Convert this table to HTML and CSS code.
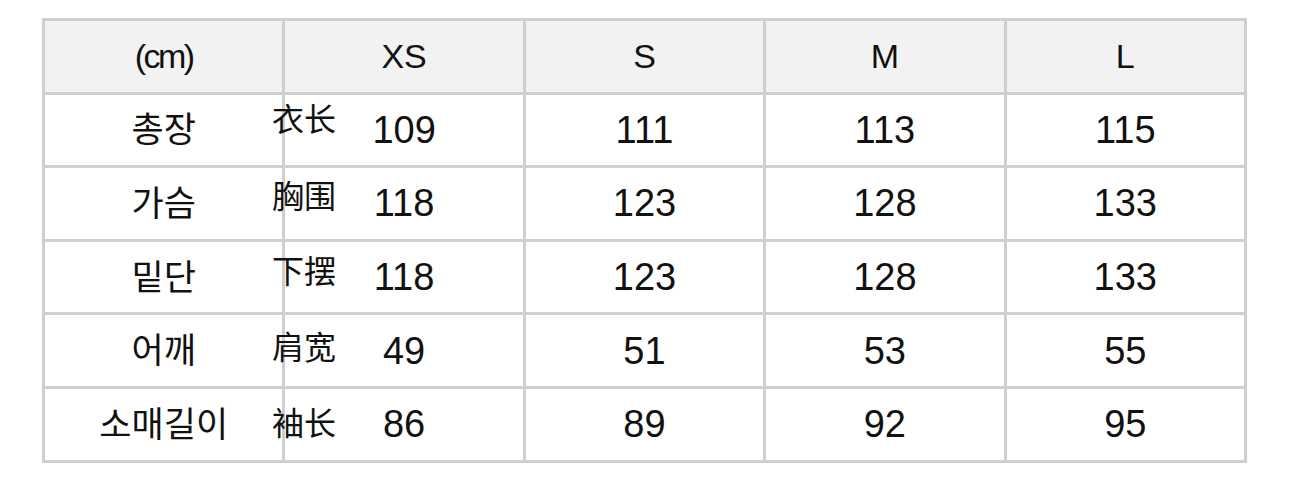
FILE: index.html
```html
<!DOCTYPE html>
<html lang="ko">
<head>
<meta charset="utf-8">
<title>Size chart</title>
<link rel="stylesheet" href="styles.css">
</head>
<body>
<table class="size-table">
  <thead>
    <tr>
      <th class="label">(cm)</th>
      <th>XS</th>
      <th>S</th>
      <th>M</th>
      <th>L</th>
    </tr>
  </thead>
  <tbody>
    <tr>
      <td class="label"><span class="ko">총장</span><span class="zh zh1" lang="zh">衣长</span></td>
      <td>109</td><td>111</td><td>113</td><td>115</td>
    </tr>
    <tr>
      <td class="label"><span class="ko">가슴</span><span class="zh zh2" lang="zh">胸围</span></td>
      <td>118</td><td>123</td><td>128</td><td>133</td>
    </tr>
    <tr>
      <td class="label"><span class="ko">밑단</span><span class="zh zh3" lang="zh">下摆</span></td>
      <td>118</td><td>123</td><td>128</td><td>133</td>
    </tr>
    <tr>
      <td class="label"><span class="ko">어깨</span><span class="zh zh4" lang="zh">肩宽</span></td>
      <td>49</td><td>51</td><td>53</td><td>55</td>
    </tr>
    <tr>
      <td class="label"><span class="ko">소매길이</span><span class="zh zh5" lang="zh">袖长</span></td>
      <td>86</td><td>89</td><td>92</td><td>95</td>
    </tr>
  </tbody>
</table>
</body>
</html>
```

FILE: styles.css
```css
html, body {
  margin: 0;
  padding: 0;
  background: #ffffff;
}

body {
  padding: 18px 0 0 42px;
  font-family: "Liberation Sans", Arial, "Noto Sans CJK KR", sans-serif;
  color: #111111;
}

.size-table {
  border-collapse: collapse;
  width: 1205px;
  table-layout: fixed;
  border: 3px solid #cfcfcf;
}

.size-table th,
.size-table td {
  border: 3px solid #cfcfcf;
  height: 70.6px;
  padding: 0;
  text-align: center;
  vertical-align: middle;
  line-height: 1;
}

.size-table th {
  background: #f2f2f2;
  font-weight: normal;
  font-size: 34px;
}

.size-table th.label {
  letter-spacing: -2.5px;
}

.size-table td {
  font-size: 38px;
}

.size-table td.label {
  position: relative;
}

.ko {
  font-family: "Noto Sans CJK KR", sans-serif;
  font-size: 35px;
  position: relative;
  top: -1px;
}

.zh {
  position: absolute;
  left: 227px;
  font-family: "Noto Sans CJK SC", sans-serif;
  font-size: 32px;
  line-height: 1;
  white-space: nowrap;
}

.zh1 { top: 6px; }
.zh2 { top: 10px; }
.zh3 { top: 11px; }
.zh4 { top: 14px; }
.zh5 { top: 16px; }
```
